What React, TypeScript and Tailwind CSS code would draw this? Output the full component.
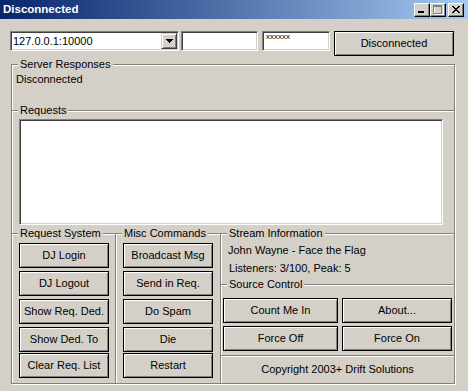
import React from "react";

const sunken =
  "border border-t-[#808080] border-l-[#808080] border-r-white border-b-white shadow-[inset_1px_1px_0_#404040,inset_-1px_-1px_0_#d4d0c8] bg-white";

function Button({ children, className = "" }: { children: React.ReactNode; className?: string }) {
  return (
    <button
      className={`flex h-[25px] items-center justify-center border border-black bg-[#d4d0c8] text-[11px] leading-[13px] text-black shadow-[inset_1px_1px_0_#fff,inset_-1px_-1px_0_#808080] ${className}`}
    >
      {children}
    </button>
  );
}

function Group({
  label,
  className = "",
  children,
}: {
  label: string;
  className?: string;
  children?: React.ReactNode;
}) {
  return (
    <fieldset
      className={`min-w-0 border border-[#808080] shadow-[inset_1px_1px_0_#fff,1px_1px_0_#fff] ${className}`}
    >
      <legend className="ml-[6px] bg-[#d4d0c8] px-[2px] text-[11px] leading-[13px]">{label}</legend>
      {children}
    </fieldset>
  );
}

function CaptionButton({ children, className = "" }: { children: React.ReactNode; className?: string }) {
  return (
    <div
      className={`h-[14px] w-[16px] border border-t-white border-l-white border-r-black border-b-black bg-[#d4d0c8] shadow-[inset_-1px_-1px_0_#808080] ${className}`}
    >
      <svg width="14" height="12" shapeRendering="crispEdges">
        {children}
      </svg>
    </div>
  );
}

export default function App() {
  return (
    <div className="h-[391px] w-[468px] overflow-hidden bg-[#d4d0c8] font-['Liberation_Sans',Arial,sans-serif] text-[11px] leading-[13px] text-black">
      {/* title bar */}
      <div className="flex h-[19px] items-center bg-linear-to-r from-[#0a246a] to-[#a6caf0] pl-[3px] pr-[4px]">
        <span className="text-[11.5px] font-bold text-white">Disconnected</span>
        <div className="ml-auto flex">
          <CaptionButton>
            <rect x="3" y="7" width="6" height="2" fill="#000" />
          </CaptionButton>
          <CaptionButton>
            <rect x="3" y="2" width="9" height="8" fill="none" stroke="#fff" strokeWidth="1" transform="translate(0.5 0.5)" />
            <rect x="2" y="1" width="9" height="2" fill="#808080" />
            <rect x="2" y="1" width="1" height="9" fill="#808080" />
            <rect x="10" y="1" width="1" height="9" fill="#808080" />
            <rect x="2" y="9" width="9" height="1" fill="#808080" />
          </CaptionButton>
          <CaptionButton className="ml-[2px]">
            <path
              d="M3 2h2v1h1v1h2V3h1V2h2v1h-1v1h-1v1h-1v1h1v1h1v1h1v1H9V8H8V7H6v1H5v1H3V8h1V7h1V6h1V5H5V4H4V3H3z"
              fill="#000"
            />
          </CaptionButton>
        </div>
      </div>

      {/* connection row */}
      <div className="flex items-start pl-[10px] pt-[12px]">
        <div className={`flex h-[20px] w-[169px] items-center p-[1px] ${sunken}`}>
          <span className="ml-[1px] flex-1">127.0.0.1:10000</span>
          <div className="flex h-[16px] w-[16px] items-center justify-center border border-t-[#d4d0c8] border-l-[#d4d0c8] border-r-[#404040] border-b-[#404040] bg-[#d4d0c8] shadow-[inset_1px_1px_0_#fff,inset_-1px_-1px_0_#808080]">
            <svg width="7" height="4" shapeRendering="crispEdges">
              <path d="M0 0h7v1H6v1H5v1H4v1H3V3H2V2H1V1H0z" fill="#000" />
            </svg>
          </div>
        </div>
        <div className={`ml-[2px] h-[20px] w-[77px] ${sunken}`} />
        <div className={`ml-[4px] h-[20px] w-[68px] pl-[3px] text-[8px] leading-[9px] ${sunken}`}>xxxxxx</div>
        <Button className="ml-[4px] w-[120px]">Disconnected</Button>
      </div>

      {/* groups */}
      <div className="ml-[11px] mt-[2px] w-[444px]">
        <Group label="Server Responses" className="h-[52px] border-b-0">
          <div className="mt-[2px] pl-[4px]">Disconnected</div>
        </Group>

        <Group label="Requests" className="-mt-[6px] h-[129px] border-b-0">
          <div className={`ml-[7px] mt-[2px] h-[106px] w-[424px] ${sunken}`} />
        </Group>

        <div className="-mt-[6px] flex h-[157px]">
          <Group label="Request System" className="h-full w-[104px] border-r-0">
            <div className="mt-[3px] flex flex-col gap-[3px] pl-[7px]">
              <Button className="w-[90px]">DJ Login</Button>
              <Button className="w-[90px]">DJ Logout</Button>
              <Button className="w-[90px]">Show Req. Ded.</Button>
              <Button className="w-[90px]">Show Ded. To</Button>
              <Button className="-mt-[2px] w-[90px]">Clear Req. List</Button>
            </div>
          </Group>

          <Group label="Misc Commands" className="h-full w-[105px] border-r-0">
            <div className="mt-[3px] flex flex-col gap-[3px] pl-[7px]">
              <Button className="w-[90px]">Broadcast Msg</Button>
              <Button className="w-[90px]">Send in Req.</Button>
              <Button className="w-[90px]">Do Spam</Button>
              <Button className="w-[90px]">Die</Button>
              <Button className="-mt-[2px] w-[90px]">Restart</Button>
            </div>
          </Group>

          <div className="flex w-[235px] flex-col">
            <Group label="Stream Information" className="h-[57px] border-b-0">
              <div className="mt-[4px] pl-[7px]">John Wayne - Face the Flag</div>
              <div className="mt-[5px] pl-[8px]">Listeners: 3/100, Peak: 5</div>
            </Group>

            <Group label="Source Control" className="-mt-[6px] h-[77px] border-b-0">
              <div className="mt-[7px] grid grid-cols-[115px_110px] gap-x-[4px] gap-y-[3px] pl-[2px]">
                <Button>Count Me In</Button>
                <Button>About...</Button>
                <Button>Force Off</Button>
                <Button>Force On</Button>
              </div>
            </Group>

            <div className="flex h-[29px] items-center justify-center border border-[#808080] shadow-[inset_1px_1px_0_#fff,1px_1px_0_#fff]">
              Copyright 2003+ Drift Solutions
            </div>
          </div>
        </div>
      </div>
    </div>
  );
}
